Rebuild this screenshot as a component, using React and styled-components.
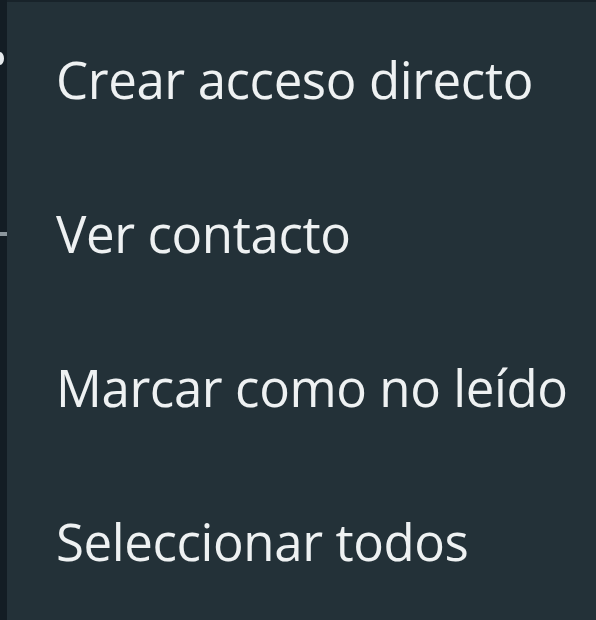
import React from "react";
import styled, { createGlobalStyle } from "styled-components";

const Global = createGlobalStyle`
  html, body { margin: 0; padding: 0; background: #111b21; }
  body { width: 596px; height: 620px; overflow: hidden; font-family: "Open Sans", "Noto Sans", sans-serif; }
`;

const Page = styled.div`
  display: flex;
  width: 596px;
  height: 620px;
  background: #111b21;
`;

const Edge = styled.div`
  position: relative;
  width: 7px;
  flex: none;
  background: #131d24;
`;

const EdgeDot = styled.span`
  position: absolute;
  left: -4px;
  top: 52px;
  width: 8px;
  height: 13px;
  border-radius: 50%;
  background: #e6eaec;
`;

const EdgeBar = styled.span`
  position: absolute;
  left: 0;
  top: 232px;
  width: 7px;
  height: 4px;
  background: #8b969c;
`;

const Menu = styled.ul`
  list-style: none;
  margin: 0;
  padding: 0;
  flex: 1;
  background: #233138;
  border-top: 2px solid #18232a;
  display: flex;
  flex-direction: column;
`;

const Item = styled.li`
  height: 154px;
  line-height: 154px;
  padding-left: 49px;
  font-size: 51px;
  font-weight: 500;
  letter-spacing: -0.4px;
  color: #eef1f2;
  white-space: nowrap;
`;

const items = ["Crear acceso directo", "Ver contacto", "Marcar como no leído", "Seleccionar todos"];

export default function App() {
  return (
    <>
      <Global />
      <Page>
        <Edge>
          <EdgeDot />
          <EdgeBar />
        </Edge>
        <Menu>
          {items.map((t) => (
            <Item key={t}>{t}</Item>
          ))}
        </Menu>
      </Page>
    </>
  );
}
